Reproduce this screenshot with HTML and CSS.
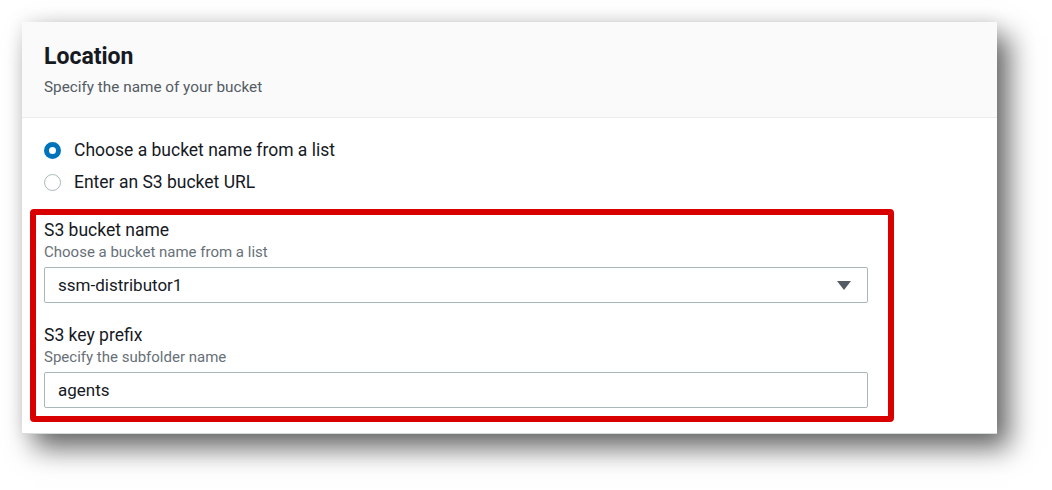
FILE: index.html
```html
<!DOCTYPE html>
<html>
<head>
<meta charset="utf-8">
<link rel="stylesheet" href="styles.css">
</head>
<body>
<div class="card">
  <div class="card-header">
    <h2 class="title">Location</h2>
    <div class="subtitle">Specify the name of your bucket</div>
  </div>
  <div class="card-body">
    <div class="radios">
      <label class="radio-row"><span class="radio checked"></span><span class="radio-label">Choose a bucket name from a list</span></label>
      <label class="radio-row"><span class="radio"></span><span class="radio-label">Enter an S3 bucket URL</span></label>
    </div>
    <div class="highlight">
      <div class="field">
        <div class="field-label">S3 bucket name</div>
        <div class="field-desc">Choose a bucket name from a list</div>
        <div class="control select"><span>ssm-distributor1</span><span class="caret"></span></div>
      </div>
      <div class="field">
        <div class="field-label">S3 key prefix</div>
        <div class="field-desc">Specify the subfolder name</div>
        <div class="control"><span>agents</span></div>
      </div>
    </div>
  </div>
</div>
</body>
</html>
```
FILE: styles.css
```css
* { box-sizing: border-box; }
html, body { margin: 0; padding: 0; background: #ffffff; }
body {
  font-family: Roboto, "Liberation Sans", sans-serif;
  color: #16191f;
  padding: 22px 0 0 22px;
  min-height: 490px;
}
.card {
  width: 975px;
  height: 412px;
  background: #ffffff;
  border-bottom: 1px solid #d5dbdb;
  box-shadow: 12px 14px 26px rgba(0,0,0,0.6), 0 -2px 16px rgba(0,0,0,0.07);
  overflow: hidden;
}
.card-header {
  background: #fafafa;
  border-bottom: 1px solid #eaeded;
  height: 96px;
  padding: 21px 22px 0 22px;
}
.title {
  margin: 0;
  font-size: 23px;
  line-height: 28px;
  font-weight: 700;
  color: #16191f;
}
.subtitle {
  margin-top: 6px;
  font-size: 15.3px;
  line-height: 20px;
  color: #545b64;
}
.card-body {
  padding: 20px 0 0 8px;
}
.radios {
  display: flex;
  flex-direction: column;
  gap: 8px;
  padding-left: 14px;
}
.radio-row {
  display: flex;
  align-items: center;
  gap: 13px;
  height: 24px;
  font-size: 17.5px;
}
.radio {
  width: 17px;
  height: 17px;
  border-radius: 50%;
  border: 1.5px solid #aab7b8;
  background: #fff;
  flex: none;
}
.radio.checked {
  border: 5.5px solid #0073bb;
}
.highlight {
  margin-top: 15px;
  width: 864px;
  border: 6px solid #d90000;
  border-radius: 4px;
  padding: 4px 20px 8px 8px;
  display: flex;
  flex-direction: column;
  gap: 21px;
}
.field-label {
  font-size: 17.5px;
  line-height: 22px;
  color: #16191f;
}
.field-desc {
  font-size: 15px;
  line-height: 22px;
  color: #687078;
}
.control {
  margin-top: 4px;
  height: 36px;
  border: 1px solid #aab7b8;
  border-radius: 2px;
  display: flex;
  align-items: center;
  justify-content: space-between;
  padding: 0 16px 0 13px;
  font-size: 17px;
  color: #16191f;
}
.caret {
  width: 0;
  height: 0;
  border-left: 7px solid transparent;
  border-right: 7px solid transparent;
  border-top: 9px solid #545b64;
}
```
